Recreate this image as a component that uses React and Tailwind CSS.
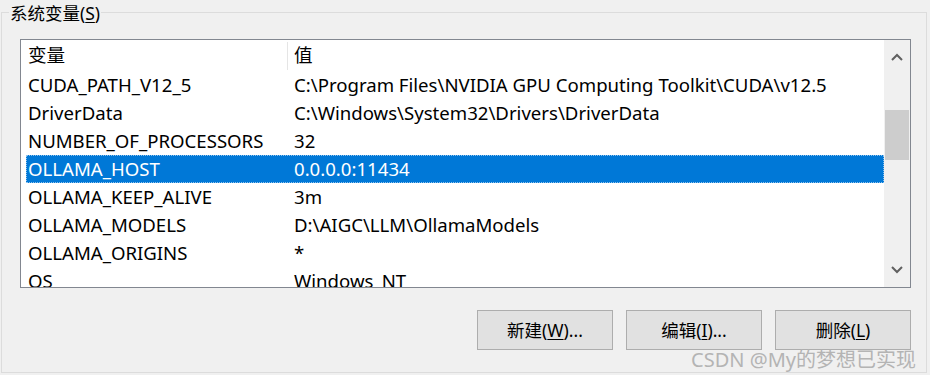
import React from "react";

const rows = [
  ["CUDA_PATH_V12_5", "C:\\Program Files\\NVIDIA GPU Computing Toolkit\\CUDA\\v12.5"],
  ["DriverData", "C:\\Windows\\System32\\Drivers\\DriverData"],
  ["NUMBER_OF_PROCESSORS", "32"],
  ["OLLAMA_HOST", "0.0.0.0:11434", true],
  ["OLLAMA_KEEP_ALIVE", "3m"],
  ["OLLAMA_MODELS", "D:\\AIGC\\LLM\\OllamaModels"],
  ["OLLAMA_ORIGINS", "*"],
  ["OS", "Windows_NT"],
];

function Btn({ children }) {
  return (
    <div className="w-[136px] h-[40px] bg-[#e1e1e1] border border-[#adadad] flex items-center justify-center text-[17.5px] text-black">
      {children}
    </div>
  );
}

export default function App() {
  return (
    <div
      className="w-[930px] h-[375px] bg-[#f0f0f0] relative overflow-hidden pt-[12px] pl-[1px] pr-[3px] pb-[2px] text-black"
      style={{ fontFamily: '"Noto Sans", "Noto Sans CJK SC", sans-serif' }}
    >
      <div className="relative h-full border border-[#dcdcdc] pl-[18px] pt-[26px]">
        <div className="absolute -top-[12px] left-[7px] bg-[#f0f0f0] px-[1px] text-[17.5px] leading-[24px]">
          系统变量(<span className="underline underline-offset-2">S</span>)
        </div>

        {/* list */}
        <div className="w-[891px] h-[249px] border border-[#828790] bg-white flex">
          <div className="flex-1 overflow-hidden flex flex-col text-[18.6px]">
            <div className="h-[31px] shrink-0 flex items-center">
              <div className="w-[266px] pl-[7px] leading-none">变量</div>
              <div className="w-px h-[28px] bg-[#e5e5e5]" />
              <div className="pl-[6px] leading-none">值</div>
            </div>
            {rows.map(([k, v, sel]) => (
              <div
                key={k}
                className={
                  "h-[28px] shrink-0 ml-[5px] flex items-center whitespace-nowrap " +
                  (sel
                    ? "bg-[#0078d7] text-white border border-dotted border-[#8fc3ee]"
                    : "border border-transparent")
                }
              >
                <div className="w-[268px] pl-[2px] -ml-px">{k}</div>
                <div>{v}</div>
              </div>
            ))}
          </div>
          {/* scrollbar */}
          <div className="w-[26px] bg-[#f0f0f0] flex flex-col items-center">
            <div className="h-[34px] w-full flex items-center justify-center">
              <svg width="12" height="8" viewBox="0 0 12 8">
                <polyline points="1,7 6,2 11,7" fill="none" stroke="#606060" strokeWidth="2" />
              </svg>
            </div>
            <div className="mt-[36px] h-[50px] w-[24px] bg-[#cdcdcd]" />
            <div className="flex-1" />
            <div className="h-[34px] w-full flex items-center justify-center">
              <svg width="12" height="8" viewBox="0 0 12 8">
                <polyline points="1,1 6,6 11,1" fill="none" stroke="#606060" strokeWidth="2" />
              </svg>
            </div>
          </div>
        </div>

        {/* buttons */}
        <div className="w-[891px] mt-[22px] flex justify-end gap-[13px]">
          <Btn>
            新建(<span className="underline underline-offset-2">W</span>)...
          </Btn>
          <Btn>
            编辑(<span className="underline underline-offset-2">I</span>)...
          </Btn>
          <Btn>
            删除(<span className="underline underline-offset-2">L</span>)
          </Btn>
        </div>
      </div>

      <div className="absolute right-[14px] bottom-[5px] text-[20px] leading-none text-[#b4b4b4] whitespace-nowrap">
        CSDN @My的梦想已实现
      </div>
    </div>
  );
}
